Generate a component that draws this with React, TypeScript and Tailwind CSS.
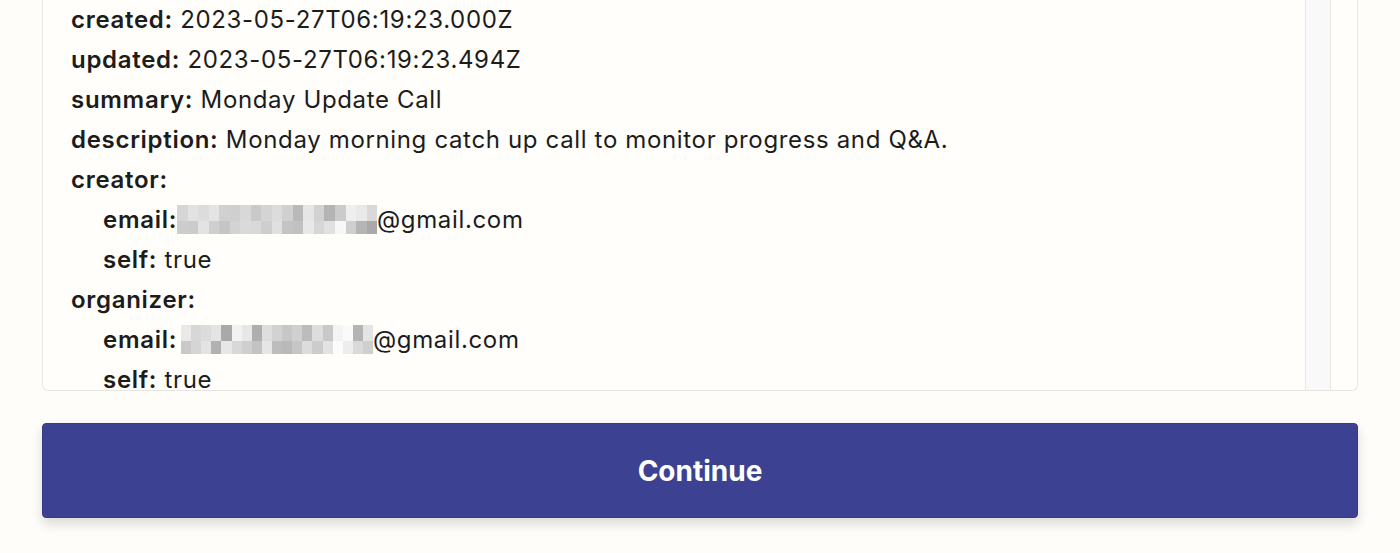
import React from "react";

const mosaicA: string[][] = [
  ["#d6d6d6","#e2e2e2","#dcdcdc","#e4e4e4","#d0d0d0","#cfcfcf","#d8d8d8","#c9c9c9","#d4d4d4","#dcdcdc","#d0d0d0","#b9b9b9","#e6e6e6","#d2d2d2","#b4b4b4","#cbcbcb","#efefef","#e9e9e9","#d9d9d9"],
  ["#cdcdcd","#cbcbcb","#e3e3e3","#cfcfcf","#c6c6c6","#d3d3d3","#dadada","#d9d9d9","#cecece","#e0e0e0","#c4c4c4","#c1c1c1","#e8e8e8","#d6d6d6","#e1e1e1","#f7f7f7","#cfcfcf","#b5b5b5","#a9a9a9"],
];
const mosaicB: string[][] = [
  ["#e9e9e9","#d7d7d7","#dcdcdc","#e4e4e4","#a9a9a9","#f2f2f2","#e7e7e7","#aeaeae","#dedede","#d2d2d2","#c7c7c7","#d0d0d0","#bcbcbc","#dddddd","#c8c8c8","#f4f4f4","#fafafa","#b4b4b4","#e4e4e4"],
  ["#c9c9c9","#d5d5d5","#e3e3e3","#b1b1b1","#e7e7e7","#d8d8d8","#cfcfcf","#c3c3c3","#e6e6e6","#bdbdbd","#b9b9b9","#c6c6c6","#dcdcdc","#cccccc","#e2e2e2","#fbfbfb","#ededed","#d9d9d9","#cfcfcf"],
];

function Mosaic({ rows, w, ml }: { rows: string[][]; w: number; ml: number }) {
  return (
    <span
      className="inline-flex flex-col h-[29px] align-middle relative top-[-2px]"
      style={{ width: w, marginLeft: ml }}
    >
      {rows.map((r, i) => (
        <span key={i} className={i === 0 ? "flex h-[16px]" : "flex h-[13px]"}>
          {r.map((c, j) => (
            <span key={j} className="flex-1" style={{ backgroundColor: c }} />
          ))}
        </span>
      ))}
    </span>
  );
}

function Row({ label, value, indent }: { label: string; value?: React.ReactNode; indent?: boolean }) {
  return (
    <div className={`h-[40px] leading-[40px] whitespace-nowrap ${indent ? "pl-8" : ""}`}>
      <span className="font-semibold tracking-[0.7px]">{label}</span>
      {value !== undefined && <span>{value}</span>}
    </div>
  );
}

export default function App() {
  return (
    <div
      className="w-[1400px] h-[553px] bg-[#fffdf9] overflow-hidden text-[#1c1c1c]"
      style={{ fontFamily: "Inter, 'Noto Sans', sans-serif" }}
    >
      <div className="mx-[42px] h-[391px] overflow-hidden border border-t-0 border-[#e7e5e0] rounded-b-[6px] bg-[#fffefb] flex">
        <div className="flex-1 pl-7 text-[24px] tracking-[0.65px]">
          <Row label="created:" value=" 2023-05-27T06:19:23.000Z" />
          <Row label="updated:" value=" 2023-05-27T06:19:23.494Z" />
          <Row label="summary:" value=" Monday Update Call" />
          <Row label="description:" value=" Monday morning catch up call to monitor progress and Q&A." />
          <Row label="creator:" />
          <Row
            label="email:"
            indent
            value={
              <>
                <Mosaic rows={mosaicA} w={200} ml={0} />
                <span>@gmail.com</span>
              </>
            }
          />
          <Row label="self:" value=" true" indent />
          <Row label="organizer:" />
          <Row
            label="email:"
            indent
            value={
              <>
                <Mosaic rows={mosaicB} w={192} ml={4} />
                <span>@gmail.com</span>
              </>
            }
          />
          <Row label="self:" value=" true" indent />
        </div>
        <div className="w-[26px] border-x border-[#e8e8e6] bg-[#f9f9fa]" />
        <div className="w-[26px]" />
      </div>
      <div className="mx-[42px] mt-[32px]">
        <button className="w-full h-[95px] rounded-[4px] bg-[#3c4291] border border-[#363c88] text-white text-[28px] font-bold shadow-[0_6px_12px_rgba(0,0,0,0.14)]">
          Continue
        </button>
      </div>
    </div>
  );
}
